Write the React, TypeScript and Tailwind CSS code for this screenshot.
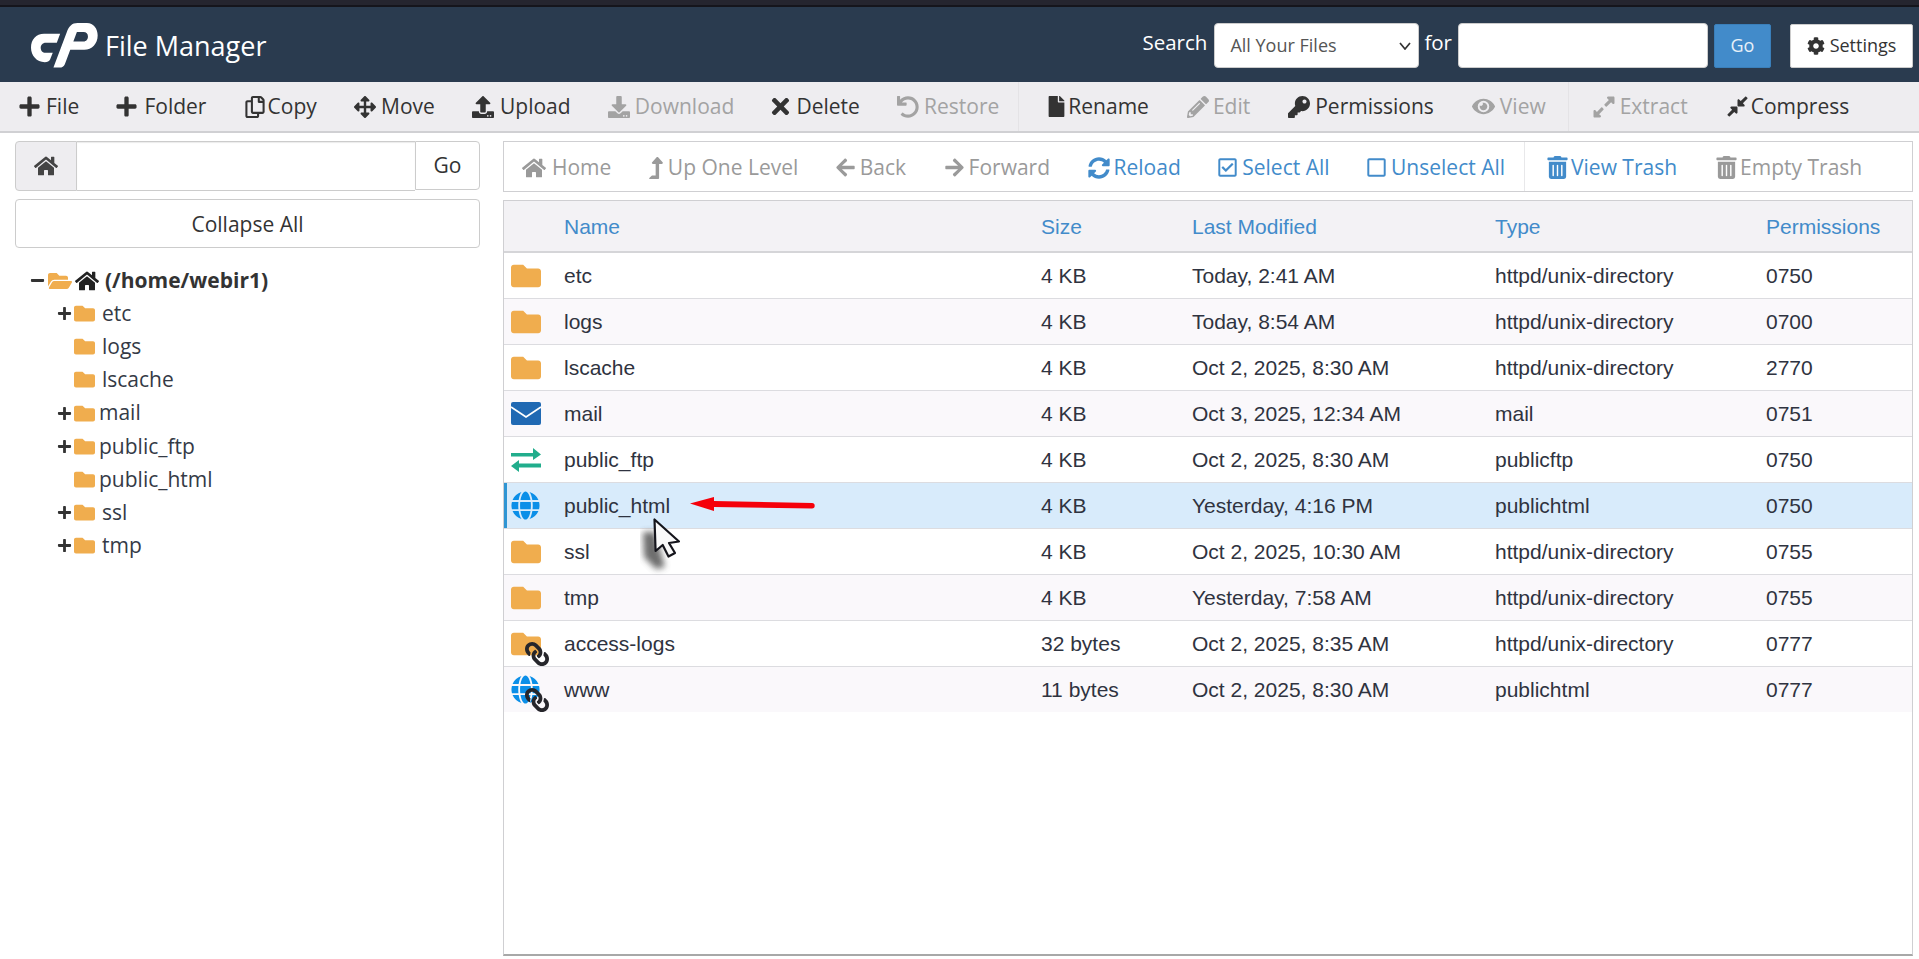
import React from "react";
import {
  FaPlus, FaRegCopy, FaArrowsAlt, FaUpload, FaDownload, FaTimes, FaUndo, FaFile, FaPencilAlt, FaKey, FaEye,
  FaExpandAlt, FaCompressAlt, FaHome, FaLevelUpAlt, FaArrowLeft, FaArrowRight, FaSyncAlt, FaRegCheckSquare,
  FaRegSquare, FaTrashAlt, FaCog, FaFolder, FaFolderOpen, FaGlobe, FaLink, FaMinus,
} from "react-icons/fa";

const Logo = () => (
  <svg viewBox="33 25 200 134" className="w-[67px] h-[45px] shrink-0" fill="#fff">
    <path d="M120 57 L110 84 L78 84 C66 84 62 92 62 99 C62 108 68 114 76 114 L98 114 L90 134 C87 140 82 142 74 142 C50 142 33 122 33 99 C33 74 48 57 72 57 Z" />
    <path d="M140 52 C146 35 155 25 172 25 L200 25 C220 25 232 42 232 62 C232 86 215 105 192 105 L150 105 L158 80 L190 80 C198 80 203 73 203 65 C203 57 198 52 190 52 L170 52 L134 148 C131 155 126 158 118 158 L100 158 Z" />
  </svg>
);

type Tool = { icon: React.ReactNode; label: string; off?: boolean; w: string };

const Item = ({ t, tone }: { t: Tool; tone: string }) => (
  <div className={`flex items-center ${tone}`}>
    <span className={`flex items-center justify-start [&>svg]:shrink-0 ${t.w}`}>{t.icon}</span>
    <span>{t.label}</span>
  </div>
);

const group1: Tool[] = [
  { icon: <FaPlus size={23} className="-ml-[1px]" />, label: "File", w: "w-[27px]" },
  { icon: <FaPlus size={23} className="-ml-[1px]" />, label: "Folder", w: "w-[28px]" },
  { icon: <FaRegCopy size={22} />, label: "Copy", w: "w-[24px]" },
  { icon: <FaArrowsAlt size={22} />, label: "Move", w: "w-[27px]" },
  { icon: <FaUpload size={22} />, label: "Upload", w: "w-[28px]" },
  { icon: <FaDownload size={22} />, label: "Download", off: true, w: "w-[27px]" },
  { icon: <FaTimes size={25} className="-ml-[4px]" />, label: "Delete", w: "w-[25px]" },
  { icon: <FaUndo size={22} />, label: "Restore", off: true, w: "w-[27px]" },
];
const group2: Tool[] = [
  { icon: <FaFile size={21} />, label: "Rename", w: "w-[22px]" },
  { icon: <FaPencilAlt size={22} />, label: "Edit", off: true, w: "w-[26px]" },
  { icon: <FaKey size={22} />, label: "Permissions", w: "w-[27px]" },
  { icon: <FaEye size={23} />, label: "View", off: true, w: "w-[28px]" },
];
const group3: Tool[] = [
  { icon: <FaExpandAlt size={24} />, label: "Extract", off: true, w: "w-[28px]" },
  { icon: <FaCompressAlt size={23} />, label: "Compress", w: "w-[25px]" },
];
const nav1: Tool[] = [
  { icon: <FaHome size={24} />, label: "Home", off: true, w: "w-[30px]" },
  { icon: <FaLevelUpAlt size={22} className="-ml-[4px]" />, label: "Up One Level", off: true, w: "w-[19px]" },
  { icon: <FaArrowLeft size={21} className="-ml-[1px]" />, label: "Back", off: true, w: "w-[24px]" },
  { icon: <FaArrowRight size={21} />, label: "Forward", off: true, w: "w-[25px]" },
  { icon: <FaSyncAlt size={22} />, label: "Reload", w: "w-[26px]" },
  { icon: <FaRegCheckSquare size={21} className="-ml-[1px]" />, label: "Select All", w: "w-[24px]" },
  { icon: <FaRegSquare size={21} className="-ml-[1px]" />, label: "Unselect All", w: "w-[24px]" },
];
const nav2: Tool[] = [
  { icon: <FaTrashAlt size={23} />, label: "View Trash", w: "w-[25px]" },
  { icon: <FaTrashAlt size={23} className="-ml-[1px]" />, label: "Empty Trash", off: true, w: "w-[24px]" },
];

const Folder = () => <FaFolder size={21} className="text-[#f0ad4e] shrink-0" />;

const tree = [
  { name: "etc", plus: true, wide: true },
  { name: "logs", plus: false, wide: true },
  { name: "lscache", plus: false, wide: true },
  { name: "mail", plus: true, wide: false },
  { name: "public_ftp", plus: true, wide: false },
  { name: "public_html", plus: false, wide: false },
  { name: "ssl", plus: true, wide: true },
  { name: "tmp", plus: true, wide: true },
];

const BigFolder = () => <FaFolder size={30} className="text-[#f0ad4e]" />;
const Globe = () => <FaGlobe size={29} className="text-[#0b8fe8]" />;
const Mail = () => (
  <svg viewBox="0 0 30 23" className="w-[30px] h-[23px]">
    <rect width="30" height="23" rx="2" fill="#2069b3" />
    <path d="M0 5 L15 15 L30 5" fill="none" stroke="#fff" strokeWidth="1.8" />
  </svg>
);
const Ftp = () => (
  <svg viewBox="0 0 30 24" className="w-[30px] h-[24px]" fill="#21ad8c">
    <path d="M0 5 H22 V0 L30 6.5 L22 12 V8.5 H0 Z" />
    <path d="M30 15.5 H8 V12 L0 18 L8 24 V19.5 H30 Z" />
  </svg>
);
const Linked = ({ children }: { children: React.ReactNode }) => (
  <div className="relative flex items-center">
    {children}
    <FaLink size={24} className="absolute left-[14px] top-[13px] -scale-x-100 text-[#26262b]" />
  </div>
);

const rows: { icon: React.ReactNode; name: string; size: string; mod: string; type: string; perm: string; sel?: boolean }[] = [
  { icon: <BigFolder />, name: "etc", size: "4 KB", mod: "Today, 2:41 AM", type: "httpd/unix-directory", perm: "0750" },
  { icon: <BigFolder />, name: "logs", size: "4 KB", mod: "Today, 8:54 AM", type: "httpd/unix-directory", perm: "0700" },
  { icon: <BigFolder />, name: "lscache", size: "4 KB", mod: "Oct 2, 2025, 8:30 AM", type: "httpd/unix-directory", perm: "2770" },
  { icon: <Mail />, name: "mail", size: "4 KB", mod: "Oct 3, 2025, 12:34 AM", type: "mail", perm: "0751" },
  { icon: <Ftp />, name: "public_ftp", size: "4 KB", mod: "Oct 2, 2025, 8:30 AM", type: "publicftp", perm: "0750" },
  { icon: <Globe />, name: "public_html", size: "4 KB", mod: "Yesterday, 4:16 PM", type: "publichtml", perm: "0750", sel: true },
  { icon: <BigFolder />, name: "ssl", size: "4 KB", mod: "Oct 2, 2025, 10:30 AM", type: "httpd/unix-directory", perm: "0755" },
  { icon: <BigFolder />, name: "tmp", size: "4 KB", mod: "Yesterday, 7:58 AM", type: "httpd/unix-directory", perm: "0755" },
  { icon: <Linked><BigFolder /></Linked>, name: "access-logs", size: "32 bytes", mod: "Oct 2, 2025, 8:35 AM", type: "httpd/unix-directory", perm: "0777" },
  { icon: <Linked><Globe /></Linked>, name: "www", size: "11 bytes", mod: "Oct 2, 2025, 8:30 AM", type: "publichtml", perm: "0777" },
];

const cols = "grid grid-cols-[60px_477px_151px_303px_271px_1fr] items-center";

export default function App() {
  return (
    <div className="relative h-[959px] w-[1919px] overflow-hidden bg-white flex flex-col font-['Open_Sans',sans-serif] text-[21px] text-[#333]">
      <div className="h-[7px] bg-[#25252f] border-b-2 border-[#15151c]" />
      <header className="h-[75px] bg-[#2a3b4f] flex items-center text-white shrink-0">
        <div className="ml-[31px] mt-[2px] flex items-center">
          <Logo />
          <span className="ml-[7px] text-[27px] leading-none">File Manager</span>
        </div>
        <div className="ml-auto mr-[6px] mt-[2px] flex items-center">
          <span className="text-[20.5px] mb-[7px]">Search</span>
          <div className="relative ml-[7px] w-[205px] h-[45px]">
            <select className="appearance-none w-full h-full bg-white rounded-[4px] text-[#555] text-[18px] pl-[15px] pr-[24px] border border-[#ccc]">
              <option>All Your Files</option>
            </select>
            <svg viewBox="0 0 12 8" className="absolute right-[8px] top-[19px] w-[12px] h-[8px] pointer-events-none">
              <path d="M1 1 L6 7 L11 1" fill="none" stroke="#333" strokeWidth="1.7" />
            </svg>
          </div>
          <span className="ml-[5px] text-[20.5px] mb-[7px]">for</span>
          <input className="ml-[6px] w-[250px] h-[45px] bg-white rounded-[4px] border border-[#ccc]" />
          <button className="ml-[6px] w-[57px] h-[44px] bg-[#428bca] rounded-[2px] text-[18px] text-[#e6f0f8] border border-[#3a7fba]">Go</button>
          <button className="ml-[19px] w-[123px] h-[44px] bg-white rounded-[2px] text-[18px] text-[#333] border border-[#ccc] flex items-center justify-center gap-[5px]">
            <FaCog size={18} />
            <span>Settings</span>
          </button>
        </div>
      </header>
      <div className="h-[51px] shrink-0 bg-[#eeedf0] border-b-2 border-[#d0d0d3] flex items-stretch pl-[19px]">
        <div className="flex items-center gap-[37.2px] pr-[19px] border-r border-[#e4e3e6]">
          {group1.map((t) => <Item key={t.label} t={t} tone={t.off ? "text-[#a3a3a3]" : "text-[#333]"} />)}
        </div>
        <div className="flex items-center gap-[38px] pl-[27px] pr-[22px] border-r border-[#e4e3e6]">
          {group2.map((t) => <Item key={t.label} t={t} tone={t.off ? "text-[#a3a3a3]" : "text-[#333]"} />)}
        </div>
        <div className="flex items-center gap-[38px] pl-[23px]">
          {group3.map((t) => <Item key={t.label} t={t} tone={t.off ? "text-[#a3a3a3]" : "text-[#333]"} />)}
        </div>
      </div>
      <main className="flex-1 min-h-0 flex pt-[8px] pb-[3px] pl-[15px] pr-[6px]">
        <aside className="w-[465px] shrink-0 mr-[23px]">
          <div className="flex h-[50px]">
            <div className="w-[62px] bg-[#eeedf0] border border-[#ccc] rounded-l-[4px] flex items-center justify-center text-[#444]">
              <FaHome size={24} />
            </div>
            <input className="w-[338px] border-y border-[#ccc] bg-white shadow-[inset_0_1px_1px_rgba(0,0,0,0.08)]" />
            <div className="flex-1 h-[49px] border border-[#ccc] rounded-r-[4px] flex items-center justify-center">Go</div>
          </div>
          <div className="mt-[8px] h-[49px] pt-[2px] border border-[#ccc] rounded-[4px] flex items-center justify-center">Collapse All</div>
          <div className="mt-[16px] pl-[15px] text-[#343a46]">
            <div className="h-[33px] flex items-center font-bold text-[#333]">
              <FaMinus size={15} className="mr-[3px] text-[#333] shrink-0" />
              <FaFolderOpen size={24} className="text-[#f0ad4e]" />
              <FaHome size={24} className="ml-[3px] text-[#222]" />
              <span className="ml-[6px]">(/home/webir1)</span>
            </div>
            {tree.map((n) => (
              <div key={n.name} className="h-[33.2px] flex items-center pl-[27px]">
                <span className="w-[17px] flex items-center shrink-0">
                  {n.plus && <FaPlus size={15} className="text-[#333] shrink-0" />}
                </span>
                <Folder />
                <span className={n.wide ? "ml-[7px]" : "ml-[4px]"}>{n.name}</span>
              </div>
            ))}
          </div>
        </aside>
        <section className="flex-1 min-w-0 flex flex-col">
          <div className="h-[51px] shrink-0 border border-[#cfcfd2] flex items-stretch pl-[18px] text-[#428bca]">
            <div className="flex items-center gap-[37.5px] pt-[2px] pr-[19px] border-r border-[#e8e8ea]">
              {nav1.map((t) => <Item key={t.label} t={t} tone={t.off ? "text-[#9a9a9a]" : "text-[#428bca]"} />)}
            </div>
            <div className="flex items-center gap-[39px] pt-[2px] pl-[21px]">
              {nav2.map((t) => <Item key={t.label} t={t} tone={t.off ? "text-[#9a9a9a]" : "text-[#428bca]"} />)}
            </div>
          </div>
          <div className="mt-[8px] flex-1 min-h-0 border border-[#cfcfd2] border-b-2 border-b-[#a8a8a8] font-['Liberation_Sans',Arial,sans-serif] text-[21px] text-[#2f3340]">
            <div className={`${cols} h-[52px] pt-[1px] bg-[#f3f2f5] border-b-2 border-[#d5d5d8] text-[#428bca]`}>
              <span />
              <span>Name</span>
              <span>Size</span>
              <span>Last Modified</span>
              <span>Type</span>
              <span>Permissions</span>
            </div>
            {rows.map((r, i) => (
              <div
                key={r.name}
                className={`${cols} ${i < rows.length - 1 ? "h-[46px] border-b border-[#dcdce0]" : "h-[45px]"} ${r.sel ? "bg-[#d8ebfb] shadow-[inset_3px_0_0_#2f95d3]" : i % 2 === 1 ? "bg-[#faf8fb]" : "bg-white"}`}
              >
                <span className="pl-[7px] flex items-center">{r.icon}</span>
                <span>{r.name}</span>
                <span>{r.size}</span>
                <span>{r.mod}</span>
                <span>{r.type}</span>
                <span>{r.perm}</span>
              </div>
            ))}
          </div>
        </section>
      </main>
      <svg className="absolute left-[640px] top-[495px] pointer-events-none" width="180" height="84" viewBox="0 0 180 84">
        <defs>
          <filter id="blur-shadow" x="-50%" y="-50%" width="200%" height="200%"><feGaussianBlur stdDeviation="3" /></filter>
        </defs>
        <path d="M3 37 L15 37 L25 72 L16 74 L4 62 Z" fill="#4a4a4a" opacity="0.8" filter="url(#blur-shadow)" />
        <path d="M50 8.5 L74 2 V6 L172 8 A2.7 2.7 0 0 1 172 13.4 L74 12 V16 Z" fill="#f5000a" />
        <path d="M14.5 24.5 L15.6 56 L22.7 50 L28.5 61.5 L35 58 L29 48 L39 46.5 Z" fill="#fafafa" stroke="#15151c" strokeWidth="2.2" strokeLinejoin="round" />
      </svg>
    </div>
  );
}
